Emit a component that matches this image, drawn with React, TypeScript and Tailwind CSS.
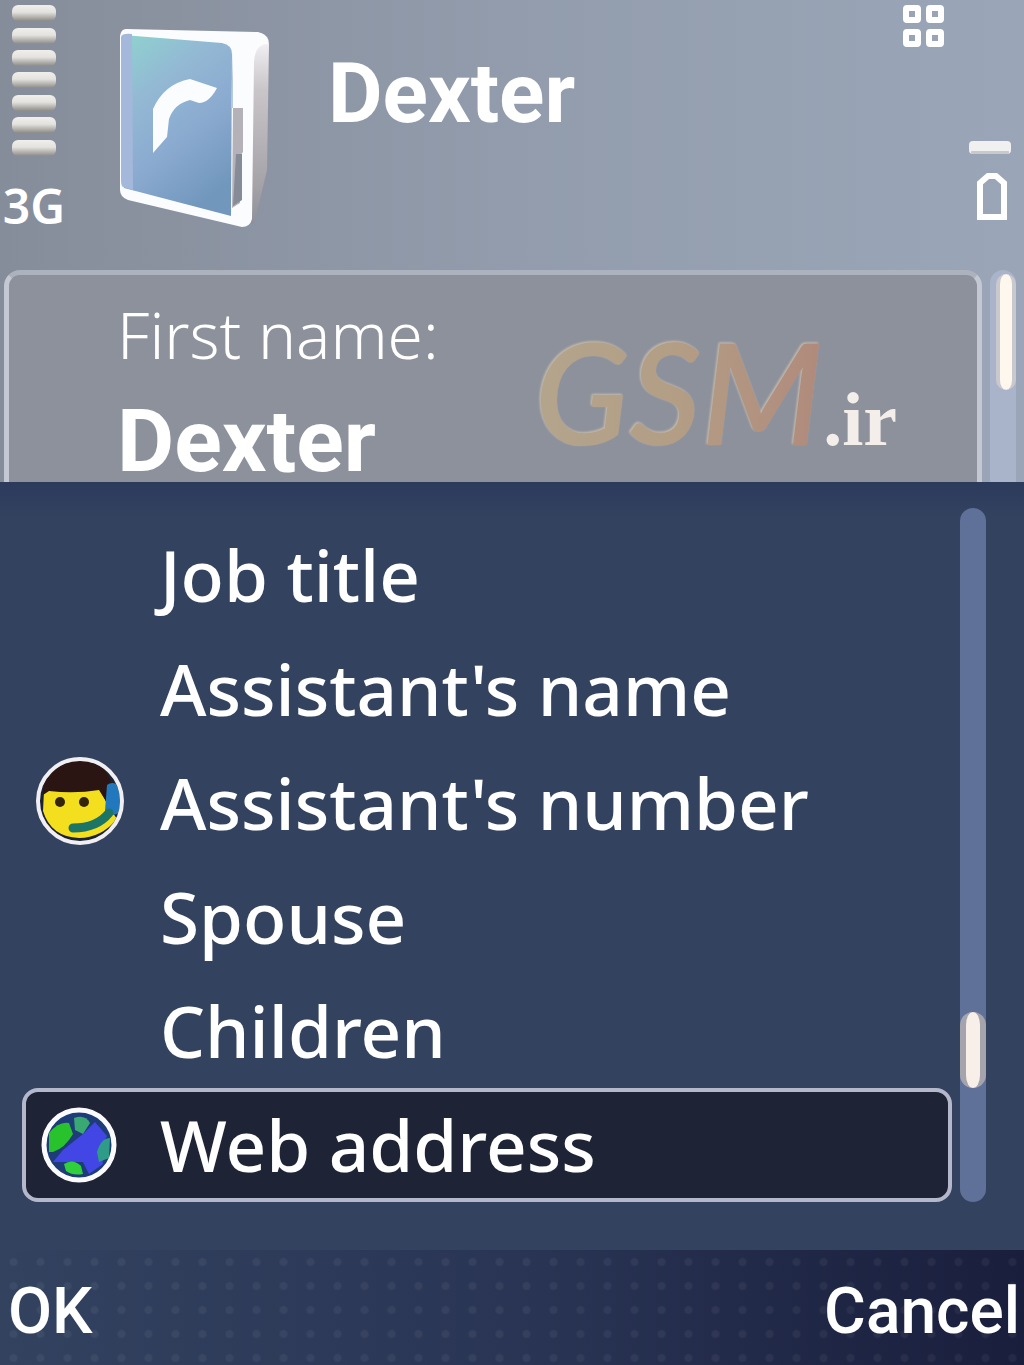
import clsx from "clsx";

type Option = { label: string; icon?: "assistant" | "globe" };

const options: Option[] = [
  { label: "Job title" },
  { label: "Assistant's name" },
  { label: "Assistant's number", icon: "assistant" },
  { label: "Spouse" },
  { label: "Children" },
  { label: "Web address", icon: "globe" },
];

const selected = "Web address";

function SignalBars() {
  return (
    <svg width="48" height="156" viewBox="0 0 48 156" aria-hidden="true">
      <defs>
        <linearGradient id="bar" x1="0" y1="0" x2="0" y2="1">
          <stop offset="0" stopColor="#f0efec" />
          <stop offset="0.45" stopColor="#e4e2df" />
          <stop offset="1" stopColor="#8d8b88" />
        </linearGradient>
      </defs>
      {[5, 28, 50, 72, 95, 117, 140].map((y) => (
        <rect key={y} x="2" y={y} width="44" height="16" rx="6" fill="url(#bar)" />
      ))}
    </svg>
  );
}

function PhonebookIcon() {
  return (
    <svg width="156" height="204" viewBox="116 26 156 204" aria-hidden="true">
      <defs>
        <linearGradient id="cover" x1="0.1" y1="0" x2="0.6" y2="1">
          <stop offset="0" stopColor="#8fd0cf" />
          <stop offset="0.3" stopColor="#93b9d4" />
          <stop offset="0.65" stopColor="#8aa9cf" />
          <stop offset="1" stopColor="#7197bd" />
        </linearGradient>
        <linearGradient id="pages" x1="0" y1="0" x2="0" y2="1">
          <stop offset="0" stopColor="#fbfafc" />
          <stop offset="0.3" stopColor="#c9c5c8" />
          <stop offset="0.8" stopColor="#a5a2a8" />
          <stop offset="1" stopColor="#8e9099" />
        </linearGradient>
      </defs>
      <path d="M236 32 L260 33 Q269 35 269 44 L267 170 L254 224 L238 224 Z" fill="url(#pages)" />
      <path
        d="M126 29 L258 32 Q268 34 268 44 Q255 44 254 62 L252 219 Q250 227 242 227 L128 200 Q120 197 120 190 L120 36 Q121 29 126 29 Z"
        fill="#fafcfe"
      />
      <path d="M123 35 L222 43 Q232 45 232 54 L231 216 L124 188 Z" fill="url(#cover)" />
      <path d="M121 37 Q122 33 132 34 L133 190 L123 187 Q121 186 121 180 Z" fill="#a4b8dc" />
      <path d="M233 52 V108 H231 Z" fill="#b6cbe0" />
      <path d="M233 108 L243 108 L243 152 L240 156 L240 203 L232 208 Z" fill="#b4b2b8" />
      <path d="M236 154 L242 154 L242 200 L233 206 Z" fill="#868b98" />
      <path d="M153 153 L153 109 Q164 84 190 79 L217 88 Q209 103 199 103 L190 100 Q174 104 169 119 L167 137 Z" fill="#fafcfd" />
    </svg>
  );
}

function MenuGridIcon() {
  return (
    <svg width="42" height="44" viewBox="0 0 42 44" fill="none" stroke="#fff" strokeWidth="6" aria-hidden="true">
      <rect x="4" y="4" width="12" height="12" rx="1" />
      <rect x="27" y="4" width="12" height="12" rx="1" />
      <rect x="4" y="28" width="12" height="12" rx="1" />
      <rect x="27" y="28" width="12" height="12" rx="1" />
    </svg>
  );
}

function BatteryIcon() {
  return (
    <svg width="44" height="82" viewBox="0 0 44 82" aria-hidden="true">
      <rect x="1" y="2" width="42" height="13" rx="4" fill="#f1f0f0" />
      <rect x="3" y="12" width="38" height="3" rx="1" fill="#c9c8ca" />
      <path d="M12 78 V44 L20 37 H28 L36 44 V78 Z" fill="none" stroke="#fff" strokeWidth="6" />
    </svg>
  );
}

function AssistantIcon() {
  return (
    <svg width="90" height="92" viewBox="0 0 90 92" aria-hidden="true">
      <defs>
        <clipPath id="face">
          <circle cx="45" cy="44" r="40" />
        </clipPath>
      </defs>
      <g clipPath="url(#face)">
        <rect width="90" height="92" fill="#1d2232" />
        <path d="M9 34 Q40 24 66 33 L72 47 L82 62 Q66 81 44 81 Q16 80 8 54 Z" fill="#f4df1e" />
        <path d="M8 38 Q8 2 45 2 Q72 4 78 32 L72 46 L64 33 Q40 37 14 34 Z" fill="#2b1513" />
        <path d="M72 28 Q80 22 88 34 L86 54 Q78 62 70 54 Z" fill="#2278bd" />
        <path d="M74 56 Q62 71 38 71" fill="none" stroke="#1c7565" strokeWidth="9" strokeLinecap="round" />
        <circle cx="25" cy="45" r="5" fill="#33250c" />
        <circle cx="49" cy="45" r="5" fill="#33250c" />
      </g>
      <circle cx="45" cy="44" r="42" fill="none" stroke="#f1eff2" strokeWidth="4" />
    </svg>
  );
}

function GlobeIcon() {
  return (
    <svg width="78" height="78" viewBox="0 0 78 78" aria-hidden="true">
      <defs>
        <clipPath id="earth">
          <circle cx="38" cy="39" r="34" />
        </clipPath>
      </defs>
      <g clipPath="url(#earth)">
        <rect width="78" height="78" fill="#1e3c78" />
        <path d="M22 44 L42 28 L54 16 L66 30 L60 42 L62 58 L48 68 L42 56 L12 56 Z" fill="#4146e4" />
        <path d="M8 46 L8 27 Q18 15 28 17 L32 28 Q24 42 12 46 Z" fill="#28c32c" />
        <path d="M33 12 Q44 8 49 17 L42 28 L34 24 Z" fill="#3aa873" />
        <path d="M23 58 Q32 52 40 60 L42 68 Q32 70 25 65 Z" fill="#2fd03c" />
        <path d="M56 46 Q60 32 69 32 L68 52 L58 56 Z" fill="#2e9c86" />
      </g>
      <circle cx="38" cy="39" r="35" fill="none" stroke="#fbfbfd" strokeWidth="5" />
    </svg>
  );
}

function StatusHeader() {
  return (
    <header className="flex h-[270px] items-start justify-between">
      <div className="flex items-start">
        <div className="flex w-[68px] flex-col items-center">
          <SignalBars />
          <span className="mt-7 text-5xl leading-[44px] font-semibold">3G</span>
        </div>
        <div className="pt-[26px] pl-12">
          <PhonebookIcon />
        </div>
        <h1 className="pt-[52px] pl-14 font-['Roboto',sans-serif] text-[84px] leading-[84px] font-bold">Dexter</h1>
      </div>
      <div className="flex items-start pr-3">
        <div className="pt-1">
          <MenuGridIcon />
        </div>
        <div className="pt-[139px] pl-6">
          <BatteryIcon />
        </div>
      </div>
    </header>
  );
}

function NameField() {
  return (
    <section className="flex h-[212px] items-start gap-2 pr-2 pl-1">
      <div className="flex h-full min-w-0 flex-1 items-start justify-between rounded-t-2xl border-x-[5px] border-t-[5px] border-x-[#c3c8d2] border-t-[#acb2be] bg-[#8d919c] pl-[108px]">
        <div className="min-w-0 flex-1 pt-6">
          <label htmlFor="first-name" className="block text-[64px] leading-[72px] font-light">
            First name:
          </label>
          <input
            id="first-name"
            defaultValue="Dexter"
            className="block h-[110px] w-full bg-transparent pt-7 font-['Roboto',sans-serif] text-[88px] leading-[84px] font-bold outline-none"
          />
        </div>
        <div className="flex items-baseline pt-[46px] pr-20">
          <span className="bg-linear-to-r from-[#b3a58c] via-[#b39d85] to-[#b08a7c] bg-clip-text font-['Lato',sans-serif] text-[140px] leading-[140px] font-semibold text-transparent italic drop-shadow-[-1px_-1px_1px_#c9bfae]">
            GSM
          </span>
          <span className="font-['Liberation_Serif',serif] text-[76px] leading-[84px] font-bold text-[#f3eee9]">.ir</span>
        </div>
      </div>
      <div className="h-full w-[26px] rounded-t-full bg-[#a9b3ca] pt-1">
        <div className="ml-auto h-[116px] w-5 rounded-full border-x-4 border-[#c9c8cd] bg-[#fdf7ee]" />
      </div>
    </section>
  );
}

function FieldList() {
  return (
    <main className="flex flex-1 gap-2 bg-linear-to-b from-[#2c3a5c] to-[#33435f] to-5% pt-[26px] pr-[38px] pb-12 pl-[22px]">
      <ul className="min-w-0 flex-1 pt-[10px]">
        {options.map(({ label, icon }) => (
          <li key={label}>
            <button
              type="button"
              className={clsx(
                "flex w-full items-center rounded-2xl border-4 py-[17px] text-left text-[71px] leading-[72px] font-medium",
                label === selected ? "border-[#b4b8ca] bg-[#1e2436]" : "border-transparent",
              )}
            >
              <span className="-my-3 flex w-[134px] shrink-0 justify-center pr-[26px]">
                {icon === "assistant" && <AssistantIcon />}
                {icon === "globe" && <GlobeIcon />}
              </span>
              {label}
            </button>
          </li>
        ))}
      </ul>
      <div className="flex w-[26px] flex-col rounded-full bg-[#5f7099]">
        <div className="grow-[504]" />
        <div className="grow-[76] rounded-full border-x-[6px] border-[#a5a4ad] bg-[#f8f0e8]" />
        <div className="grow-[114]" />
      </div>
    </main>
  );
}

function SoftKeys() {
  return (
    <footer className="bg-linear-to-r from-[#32425f] via-[#2a3555] to-[#191e3c] font-['Roboto',sans-serif]">
      <div className="flex justify-between bg-[radial-gradient(circle,#ffffff0d_3px,transparent_5px)] bg-size-[27px_24px] pt-5 pr-1 pb-[11px] pl-2">
        <button type="button" className="text-[64px] leading-[84px] font-medium">
          OK
        </button>
        <button type="button" className="text-[64px] leading-[84px] font-medium">
          Cancel
        </button>
      </div>
    </footer>
  );
}

export default function App() {
  return (
    <div className="flex min-h-screen flex-col bg-linear-to-r from-[#868d9a] via-[#929cac] to-[#9aa6b8] font-['Noto_Sans','Open_Sans',sans-serif] text-white">
      <StatusHeader />
      <NameField />
      <FieldList />
      <SoftKeys />
    </div>
  );
}
